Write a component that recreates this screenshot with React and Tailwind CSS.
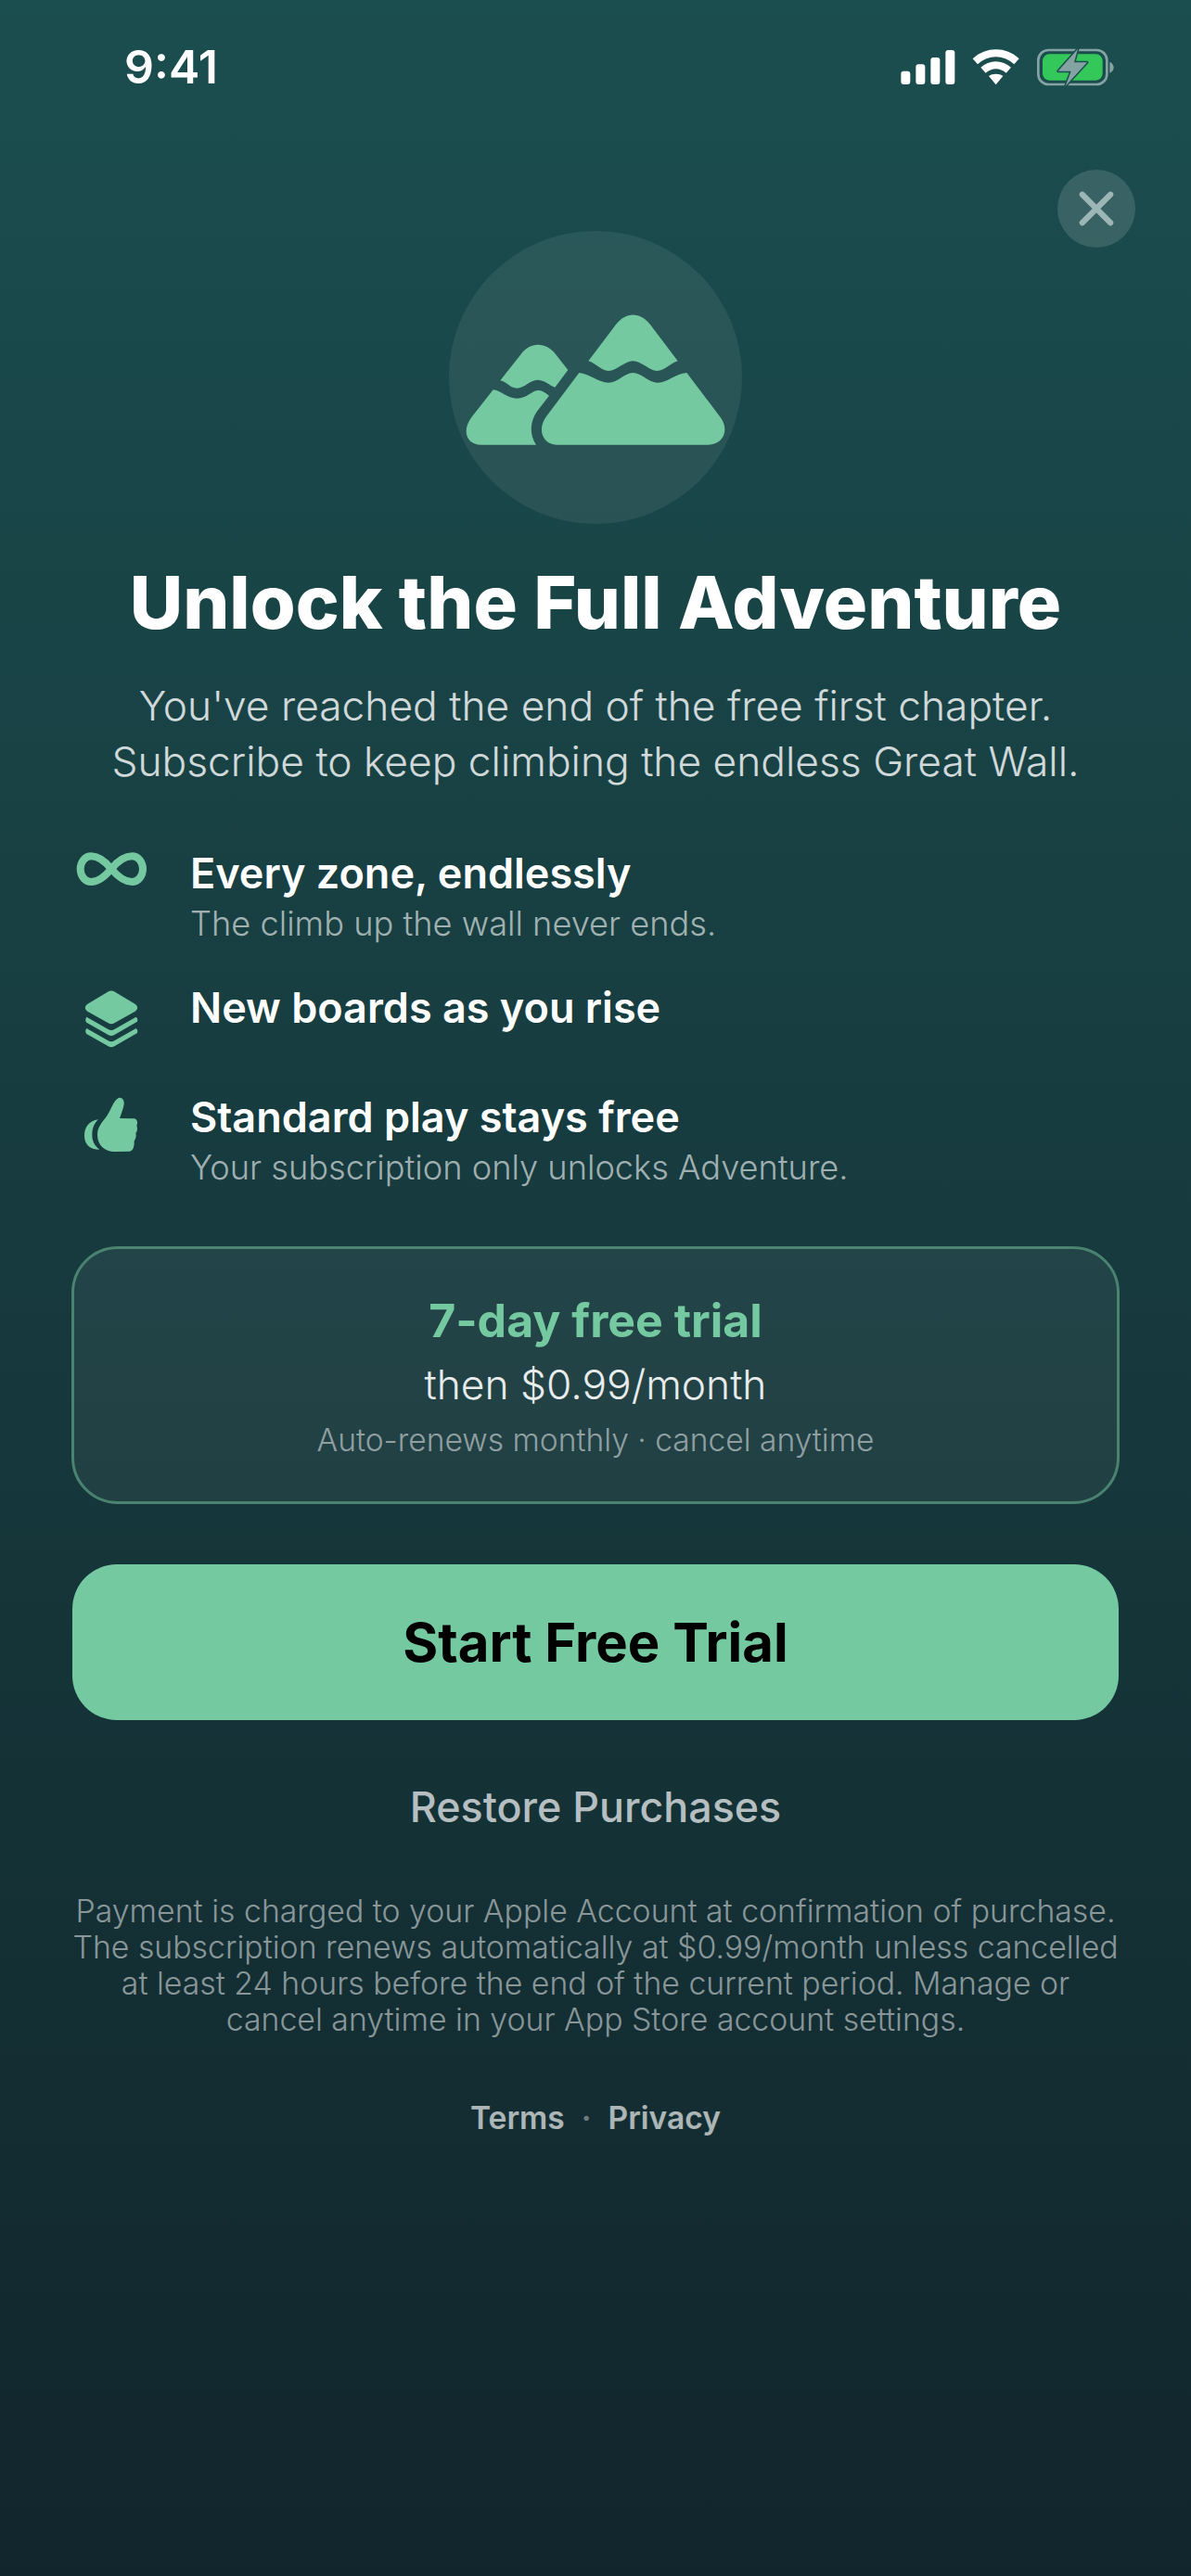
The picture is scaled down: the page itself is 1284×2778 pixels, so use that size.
import React from "react";

const font = "font-['Inter',sans-serif]";

const StatusIcons = () => (
  <svg width="240" height="44" viewBox="90 60 720 132" className="block">
    <rect x="100" y="140" width="30" height="43" rx="9" fill="#fff" />
    <rect x="148" y="118" width="30" height="65" rx="9" fill="#fff" />
    <rect x="196" y="96" width="30" height="87" rx="9" fill="#fff" />
    <rect x="244" y="72" width="30" height="111" rx="9" fill="#fff" />
    <path d="M332 100 C 375 60, 440 60, 482 100 L 466 118 C 432 86, 382 86, 348 118 Z" fill="#fff" />
    <path d="M358 128 C 385 102, 428 102, 456 128 L 440 146 C 420 128, 394 128, 374 146 Z" fill="#fff" />
    <path d="M384 156 C 396 147, 418 147, 430 156 L 407 184 Z" fill="#fff" />
    <rect x="544" y="72" width="222" height="111" rx="33" fill="none" stroke="#84a3a2" strokeWidth="8" />
    <rect x="558" y="85" width="194" height="85" rx="22" fill="#34c759" />
    <path d="M775 110 C 785 115, 788 122, 788 128 C 788 134, 785 141, 775 146 Z" fill="#84a3a2" />
    <path d="M672 68 L 608 140 L 650 140 L 632 188 L 702 112 L 660 112 Z" fill="#84a3a2" stroke="#1b4e4f" strokeWidth="9" strokeLinejoin="round" paintOrder="stroke" />
  </svg>
);

const MountainIcon = () => (
  <svg width="316" height="316" viewBox="132 57 948 948" className="block" fill="#75c9a0">
    <path d="M583 478 L672 360 C705 318 750 318 783 360 L872 478 C850 484 830 510 805 510 C780 510 755 478 727 478 C700 478 675 510 648 510 C625 510 605 484 583 478 Z" />
    <path d="M553 516 C585 518 615 548 648 548 C680 548 700 516 727 516 C755 516 775 548 808 548 C840 548 865 518 901 516 L1010 660 C1040 700 1020 749 970 749 L480 749 C440 749 415 705 445 660 Z" />
    <path d="M298 541 L365 456 C395 415 445 415 477 456 L517 507 L475 563 C455 555 440 539 418 539 C395 539 375 566 352 566 C330 566 320 546 298 541 Z" />
    <path d="M275 571 C300 573 320 599 352 599 C385 599 400 573 422 573 C435 573 445 583 456 590 L420 637 C395 670 390 715 414 749 L235 749 C190 749 172 705 205 660 Z" />
  </svg>
);

const InfinityIcon = () => (
  <svg width="80" height="40" viewBox="60 51 240 120" className="block mt-[2px]" fill="none" stroke="#75c9a0" strokeWidth="24">
    <path d="M180 111 C150 75 130 70 115 70 C95 70 80 88 80 111 C80 134 95 153 115 153 C130 153 150 147 180 111 C210 75 230 70 247 70 C267 70 282 88 282 111 C282 134 267 153 247 153 C230 153 210 147 180 111 Z" />
  </svg>
);

const LayersIcon = () => (
  <svg width="80" height="70" viewBox="60 492 240 210" className="block mt-[4px]" fill="#75c9a0">
    <path d="M167 510 L103 548 C93 555 93 565 103 572 L170 610 C177 614 183 614 190 610 L257 572 C267 565 267 555 257 548 L193 510 C185 504 175 504 167 510 Z" />
    <path d="M100 590 L170 630 Q180 636 190 630 L260 590 Q267 595 264 605 L190 648 Q180 654 170 648 L100 608 Q93 600 100 590 Z" />
    <path d="M100 627 L170 667 Q180 673 190 667 L260 627 Q267 632 264 642 L190 685 Q180 691 170 685 L100 645 Q93 637 100 627 Z" />
  </svg>
);

const ThumbIcon = () => (
  <svg width="80" height="62" viewBox="60 845 240 186" className="block mt-[4px]" fill="#75c9a0">
    <path d="M138 921 C105 925 93 950 93 973 C93 1000 110 1018 142 1018 C125 1005 118 990 118 970 C118 950 125 932 138 921 Z" />
    <path d="M205 850 C218 850 222 860 221 872 C219 885 212 903 207 917 L255 918 C265 920 266 935 262 940 C266 950 264 960 259 965 C262 975 258 985 254 990 C255 1005 252 1022 240 1024 L190 1025 C160 1025 135 1005 135 970 C135 945 150 930 165 910 C180 890 185 860 205 850 Z" />
  </svg>
);

const Feature = ({ icon, title, desc, extra }) => (
  <div className={`flex gap-[45px] ${extra || ""}`}>
    <div className="w-[80px] shrink-0">{icon}</div>
    <div>
      <div className="text-[45px] leading-[54px] font-semibold text-white">{title}</div>
      {desc && <div className="text-[36.2px] leading-[54px] font-light text-white/60">{desc}</div>}
    </div>
  </div>
);

export default function App() {
  return (
    <div className={`${font} relative min-h-screen w-full overflow-hidden bg-gradient-to-b from-[#1b4e4f] to-[#11262c] flex flex-col`}>
      <div className="flex items-center justify-between h-[72px] mt-[36px] pl-[134px] pr-[76px]">
        <span className="text-[50px] leading-[72px] font-semibold text-white">9:41</span>
        <StatusIcons />
      </div>

      <button className="absolute top-[183px] right-[60px] w-[84px] h-[84px] rounded-full bg-white/[0.13] flex items-center justify-center">
        <svg width="38" height="38" viewBox="0 0 40 40" fill="none" stroke="#9cb6b5" strokeWidth="6.5" strokeLinecap="round">
          <path d="M4 4 L36 36 M36 4 L4 36" />
        </svg>
      </button>

      <div className="self-center mt-[141px] w-[316px] h-[316px] rounded-full bg-white/[0.07]">
        <MountainIcon />
      </div>

      <h1 className="mt-[36px] text-center text-[79px] leading-[96px] font-extrabold text-white">Unlock the Full Adventure</h1>

      <p className="mt-[34px] text-center text-[44.3px] leading-[60px] font-light text-white/80">
        You've reached the end of the free first chapter.
        <br />
        Subscribe to keep climbing the endless Great Wall.
      </p>

      <div className="mt-[64px] px-[80px] flex flex-col gap-[37px]">
        <Feature icon={<InfinityIcon />} title="Every zone, endlessly" desc="The climb up the wall never ends." />
        <Feature icon={<LayersIcon />} title="New boards as you rise" extra="min-h-[81px]" />
        <Feature icon={<ThumbIcon />} title="Standard play stays free" desc="Your subscription only unlocks Adventure." />
      </div>

      <div className="mx-[77px] mt-[58px] h-[278px] pt-[3px] rounded-[50px] border-[3px] border-[#4a8370] bg-white/[0.05] flex flex-col items-center justify-center">
        <div className="text-[50px] leading-[64px] font-bold text-[#75c9a0]">7-day free trial</div>
        <div className="text-[44.3px] leading-[60px] font-light text-white/90 mt-[7px]">then $0.99/month</div>
        <div className="text-[33.6px] leading-[50px] font-light text-white/50 mt-[5px]">Auto-renews monthly · cancel anytime</div>
      </div>

      <button className="mx-[78px] mt-[65px] h-[168px] rounded-[48px] bg-[#75c9a0] text-[58px] font-bold text-black">Start Free Trial</button>

      <div className="mt-[64px] text-center text-[44.8px] leading-[60px] font-medium text-white/70">Restore Purchases</div>

      <p className="mt-[62px] text-center text-[33.8px] leading-[39px] font-light text-white/50">
        Payment is charged to your Apple Account at confirmation of purchase.
        <br />
        The subscription renews automatically at $0.99/month unless cancelled
        <br />
        at least 24 hours before the end of the current period. Manage or
        <br />
        cancel anytime in your App Store account settings.
      </p>

      <div className="mt-[64px] flex justify-center gap-[18px] text-[33.6px] leading-[46px] font-semibold text-white/65">
        <span>Terms</span>
        <span className="text-white/40">·</span>
        <span>Privacy</span>
      </div>
    </div>
  );
}
